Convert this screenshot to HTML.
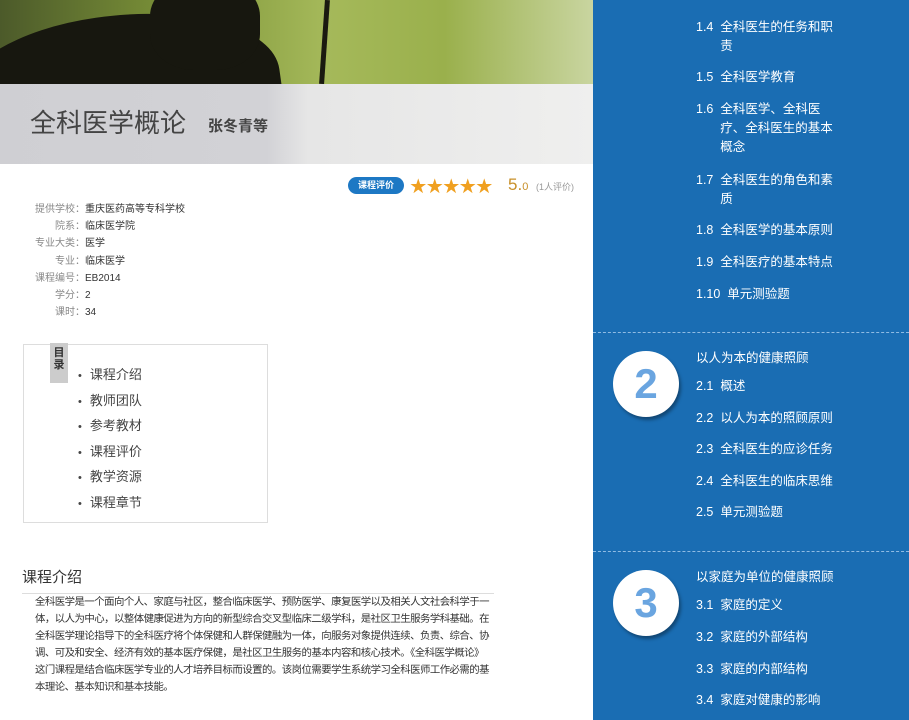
<!DOCTYPE html>
<html><head><meta charset="utf-8"><style>
*{margin:0;padding:0;box-sizing:border-box}
body{width:909px;height:720px;overflow:hidden;background:#fff;font-family:"Liberation Sans","Noto Sans CJK SC",sans-serif;position:relative}
.a{position:absolute}
.hdr{left:0;top:0;width:593px;height:84px;background:linear-gradient(90deg,#4c5a2a 0,#7d9438 30%,#a5b95a 55%,#9ab04c 75%,#c9d5a0 100%);overflow:hidden}
.blob{left:-40px;top:15px;width:320px;height:140px;border-radius:50% 60% 0 0;background:#17170f;transform:rotate(-8deg)}
.blob2{left:150px;top:-20px;width:110px;height:90px;border-radius:40%;background:#17170f}
.stem{left:322px;top:0;width:5px;height:84px;background:#1a1a10;transform:rotate(4deg)}
.band{left:0;top:84px;width:593px;height:80px;background:linear-gradient(90deg,#cfcfd3 0,#d2d2d6 45%,#e6e6e6 52%,#efefee 100%)}
.t1{left:30px;top:103px;font-size:26px;color:#444}
.t2{left:208px;top:115px;font-size:15px;color:#444;font-weight:bold}
.info{left:20px;top:201px;font-size:10px;color:#888;line-height:17.2px}
.info span{display:inline-block;width:65px;text-align:right}
.info b{font-weight:normal;color:#333}
.badge{left:348px;top:177px;width:56px;height:17px;border-radius:9px;background:#1d78c4;color:#fff;font-size:9px;font-weight:bold;text-align:center;line-height:17px}
.stars{left:410px;top:173px;color:#f0a020;font-size:16.5px;letter-spacing:0}
.score{left:508px;top:175px;color:#c8902a;font-size:17px}
.cnt{left:536px;top:180px;color:#999;font-size:9px}
.toc{left:23px;top:344px;width:245px;height:179px;border:1px solid #ddd}
.tag{left:50px;top:343px;width:18px;height:40px;background:#ccc;font-size:11px;font-weight:bold;color:#333;text-align:center;line-height:12px;padding-top:4px}
.toc ul{position:absolute;left:54px;top:18px;list-style:none;font-size:13px;color:#444;line-height:24.5px}
.toc li:before{content:"•";margin-right:8px;font-size:11px}
.h2{left:22px;top:566px;font-size:15px;color:#333}
.line{left:22px;top:593px;width:472px;height:1px;background:#ddd}
.para{left:35px;top:594px;font-size:10.4px;letter-spacing:-0.52px;color:#333;line-height:17px;white-space:nowrap}
.blue{left:593px;top:0;width:316px;height:720px;background:#1a6db3}
.blue p{position:absolute;left:103px;color:#fff;font-size:12.5px;line-height:19px;width:160px}
.dash{left:593px;width:316px;border-top:1px dashed #8fbbe3;height:0}
.circ{width:66px;height:66px;border-radius:50%;background:#fff;color:#6aa5e0;font-size:42px;font-weight:bold;text-align:center;line-height:66px;box-shadow:2px 3px 3px rgba(0,0,0,.35)}
</style></head><body>
<div class="a hdr"><div class="a blob"></div><div class="a blob2"></div><div class="a stem"></div></div>
<div class="a band"></div>
<div class="a t1">全科医学概论</div>
<div class="a t2">张冬青等</div>
<div class="a badge">课程评价</div>
<div class="a stars">★★★★★</div>
<div class="a score">5.<small style="font-size:11px">0</small></div>
<div class="a cnt">(1人评价)</div>
<div class="a info">
<div><span>提供学校：</span><b>重庆医药高等专科学校</b></div>
<div><span>院系：</span><b>临床医学院</b></div>
<div><span>专业大类：</span><b>医学</b></div>
<div><span>专业：</span><b>临床医学</b></div>
<div><span>课程编号：</span><b>EB2014</b></div>
<div><span>学分：</span><b>2</b></div>
<div><span>课时：</span><b>34</b></div>
</div>
<div class="a toc"><ul><li>课程介绍</li><li>教师团队</li><li>参考教材</li><li>课程评价</li><li>教学资源</li><li>课程章节</li></ul></div>
<div class="a tag">目<br>录</div>
<div class="a h2">课程介绍</div>
<div class="a line"></div>
<div class="a para">全科医学是一个面向个人、家庭与社区，整合临床医学、预防医学、康复医学以及相关人文社会科学于一<br>体，以人为中心，以整体健康促进为方向的新型综合交叉型临床二级学科，是社区卫生服务学科基础。在<br>全科医学理论指导下的全科医疗将个体保健和人群保健融为一体，向服务对象提供连续、负责、综合、协<br>调、可及和安全、经济有效的基本医疗保健，是社区卫生服务的基本内容和核心技术。《全科医学概论》<br>这门课程是结合临床医学专业的人才培养目标而设置的。该岗位需要学生系统学习全科医师工作必需的基<br>本理论、基本知识和基本技能。</div>
<div class="a blue">
<p style="top:18px">1.4&nbsp; 全科医生的任务和职<br>&nbsp; &nbsp; &nbsp; &nbsp;责</p>
<p style="top:68px">1.5&nbsp; 全科医学教育</p>
<p style="top:100px">1.6&nbsp; 全科医学、全科医<br>&nbsp; &nbsp; &nbsp; &nbsp;疗、全科医生的基本<br>&nbsp; &nbsp; &nbsp; &nbsp;概念</p>
<p style="top:171px">1.7&nbsp; 全科医生的角色和素<br>&nbsp; &nbsp; &nbsp; &nbsp;质</p>
<p style="top:221px">1.8&nbsp; 全科医学的基本原则</p>
<p style="top:253px">1.9&nbsp; 全科医疗的基本特点</p>
<p style="top:285px">1.10&nbsp; 单元测验题</p>
<p style="top:349px">以人为本的健康照顾</p>
<p style="top:377px">2.1&nbsp; 概述</p>
<p style="top:409px">2.2&nbsp; 以人为本的照顾原则</p>
<p style="top:440px">2.3&nbsp; 全科医生的应诊任务</p>
<p style="top:472px">2.4&nbsp; 全科医生的临床思维</p>
<p style="top:503px">2.5&nbsp; 单元测验题</p>
<p style="top:568px">以家庭为单位的健康照顾</p>
<p style="top:596px">3.1&nbsp; 家庭的定义</p>
<p style="top:628px">3.2&nbsp; 家庭的外部结构</p>
<p style="top:660px">3.3&nbsp; 家庭的内部结构</p>
<p style="top:691px">3.4&nbsp; 家庭对健康的影响</p>
<div class="a circ" style="left:20px;top:351px">2</div>
<div class="a circ" style="left:20px;top:570px">3</div>
</div>
<div class="a dash" style="top:332px"></div>
<div class="a dash" style="top:551px"></div>
</body></html>
